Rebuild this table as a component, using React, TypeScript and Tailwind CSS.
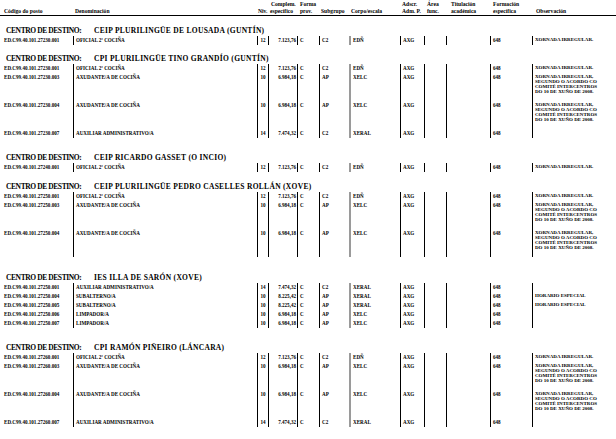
import React from "react";

type Row = {
  code: string;
  name: string;
  niv: string;
  amount: string;
  sub: string;
  corpo: string;
  obs?: string[];
  h?: number;
};

type Section = { title: string; mt: number; rows: Row[] };

const ofi = (code: string): Row => ({
  code,
  name: "OFICIAL 2ª COCIÑA",
  niv: "12",
  amount: "7.123,76",
  sub: "C2",
  corpo: "EDÑ",
  obs: ["XORNADA IRREGULAR."],
});

const axu = (code: string): Row => ({
  code,
  name: "AXUDANTE/A DE COCIÑA",
  niv: "10",
  amount: "6.984,18",
  sub: "AP",
  corpo: "XELC",
  obs: [
    "XORNADA IRREGULAR,",
    "SEGUNDO O ACORDO CO",
    "COMITÉ INTERCENTROS",
    "DO 10 DE XUÑO DE 2008.",
  ],
  h: 28,
});

const aux = (code: string): Row => ({
  code,
  name: "AUXILIAR ADMINISTRATIVO/A",
  niv: "14",
  amount: "7.474,32",
  sub: "C2",
  corpo: "XERAL",
});

const sections: Section[] = [
  {
    title: "CEIP PLURILINGÜE DE LOUSADA (GUNTÍN)",
    mt: 10,
    rows: [ofi("ED.C99.40.101.27230.001")],
  },
  {
    title: "CPI PLURILINGÜE TINO GRANDÍO (GUNTÍN)",
    mt: 9,
    rows: [
      ofi("ED.C99.40.101.27230.001"),
      axu("ED.C99.40.101.27230.003"),
      axu("ED.C99.40.101.27230.004"),
      aux("ED.C99.40.101.27230.007"),
    ],
  },
  {
    title: "CEIP RICARDO GASSET (O INCIO)",
    mt: 15,
    rows: [ofi("ED.C99.40.101.27240.001")],
  },
  {
    title: "CEIP PLURILINGÜE PEDRO CASELLES ROLLÁN (XOVE)",
    mt: 10,
    rows: [
      ofi("ED.C99.40.101.27250.001"),
      axu("ED.C99.40.101.27250.003"),
      axu("ED.C99.40.101.27250.004"),
    ],
  },
  {
    title: "IES ILLA DE SARÓN (XOVE)",
    mt: 16,
    rows: [
      aux("ED.C99.40.101.27250.001"),
      {
        code: "ED.C99.40.101.27250.004",
        name: "SUBALTERNO/A",
        niv: "10",
        amount: "8.225,42",
        sub: "AP",
        corpo: "XERAL",
        obs: ["HORARIO ESPECIAL"],
      },
      {
        code: "ED.C99.40.101.27250.005",
        name: "SUBALTERNO/A",
        niv: "10",
        amount: "8.225,42",
        sub: "AP",
        corpo: "XERAL",
        obs: ["HORARIO ESPECIAL"],
      },
      {
        code: "ED.C99.40.101.27250.006",
        name: "LIMPADOR/A",
        niv: "10",
        amount: "6.984,18",
        sub: "AP",
        corpo: "XELC",
      },
      {
        code: "ED.C99.40.101.27250.007",
        name: "LIMPADOR/A",
        niv: "10",
        amount: "6.984,18",
        sub: "AP",
        corpo: "XELC",
      },
    ],
  },
  {
    title: "CPI RAMÓN PIÑEIRO (LÁNCARA)",
    mt: 15,
    rows: [
      ofi("ED.C99.40.101.27260.001"),
      axu("ED.C99.40.101.27260.003"),
      axu("ED.C99.40.101.27260.004"),
      aux("ED.C99.40.101.27260.007"),
    ],
  },
];

const cols =
  "grid grid-cols-[73px_184px_11px_29px_22px_30px_51px_24px_22px_44px_42px_84px]";

const App = () => {
  return (
    <div className="w-[616px] h-[439px] overflow-hidden bg-white text-black font-['Liberation_Serif',serif]">
      {/* Cabeceira da táboa */}
      <div
        className={`${cols} pt-[1px] text-[5.6px] font-bold leading-[7px] whitespace-nowrap border-b border-black`}
      >
        <div className="pl-[4px] flex items-end">Código do posto</div>
        <div className="pl-[2px] flex items-end">Denominación</div>
        <div className="pl-[1px] flex items-end">Niv.</div>
        <div className="pl-[2px] flex flex-col">
          <span className="pl-[1px]">Complem.</span>
          <span>específico</span>
        </div>
        <div className="pl-[3px] flex flex-col">
          <span>Forma</span>
          <span>prov.</span>
        </div>
        <div className="pl-[2px] flex items-end">Subgrupo</div>
        <div className="pl-[2px] flex items-end">Corpo/escala</div>
        <div className="pl-[2px] flex flex-col">
          <span>Adscr.</span>
          <span>Adm. P.</span>
        </div>
        <div className="pl-[3px] flex flex-col">
          <span>Área</span>
          <span>func.</span>
        </div>
        <div className="pl-[5px] flex flex-col">
          <span>Titulación</span>
          <span>académica</span>
        </div>
        <div className="pl-[3px] flex flex-col">
          <span>Formación</span>
          <span>específica</span>
        </div>
        <div className="pl-[4px] flex items-end">Observación</div>
      </div>

      {sections.map((s, si) => (
        <div key={si} style={{ marginTop: s.mt }}>
          <div className="h-[10px] flex items-center text-[7.5px] font-bold leading-none whitespace-nowrap">
            <span className="w-[94px] pl-[6px] tracking-[-0.4px]">CENTRO DE DESTINO:</span>
            <span className="tracking-[0.3px]">{s.title}</span>
          </div>
          {s.rows.map((r, ri) => (
            <div
              key={ri}
              className={`${cols} text-[5.1px] font-bold leading-[6px] whitespace-nowrap`}
              style={{ height: r.h ?? 9 }}
            >
              <div className="pl-[4px] pt-[0.5px]">{r.code}</div>
              <div className="pl-[2px] pt-[0.5px] border-l border-black">{r.name}</div>
              <div className="pt-[0.5px] text-center border-l border-black">{r.niv}</div>
              <div className="pt-[0.5px] pr-[1px] text-right border-l border-black">{r.amount}</div>
              <div className="pl-[2px] pt-[0.5px] border-l border-black">C</div>
              <div className="pl-[2px] pt-[0.5px] border-l border-black">{r.sub}</div>
              <div className="pl-[2px] pt-[0.5px] border-l-2 border-[#9a9a9a]">{r.corpo}</div>
              <div className="pl-[2px] pt-[0.5px] border-l border-black">AXG</div>
              <div className="border-l border-black" />
              <div className="border-l border-black" />
              <div className="pl-[2px] pt-[0.5px] border-l border-black">648</div>
              <div className="pl-[2px] pt-[0.5px] border-l border-black text-[5px] leading-[5.3px]">
                {r.obs?.map((o, oi) => (
                  <div key={oi}>{o}</div>
                ))}
              </div>
            </div>
          ))}
        </div>
      ))}
    </div>
  );
};

export default App;
